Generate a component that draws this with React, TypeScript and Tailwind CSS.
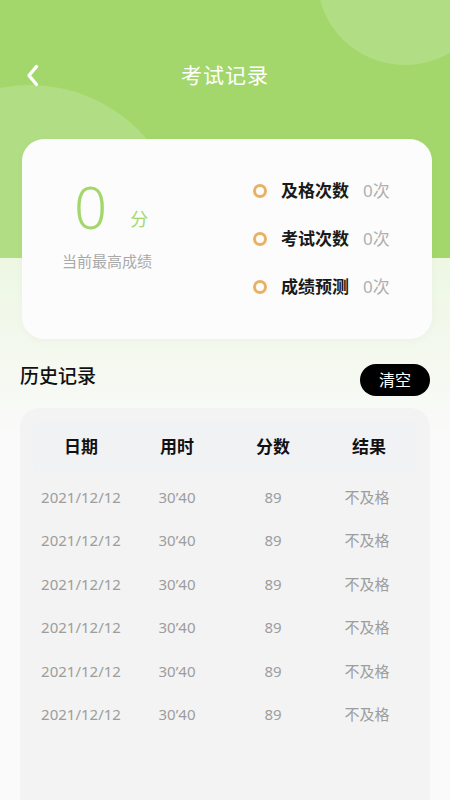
const stats = [
  { label: "及格次数", value: "0次" },
  { label: "考试次数", value: "0次" },
  { label: "成绩预测", value: "0次" },
];

const records = Array.from({ length: 6 }, () => ({
  date: "2021/12/12",
  time: "30’40",
  score: "89",
  result: "不及格",
}));

export default function App() {
  return (
    <div
      className="relative w-[450px] h-[800px] overflow-hidden bg-[linear-gradient(to_bottom,#a4d76b_0px,#a4d76b_258px,#edf7e2_258px,#fafafa_440px)]"
      style={{ fontFamily: '"Noto Sans", "Noto Sans CJK SC", sans-serif' }}
    >
      {/* decorative circles in the green header */}
      <div className="absolute left-0 top-0 w-[450px] h-[258px] overflow-hidden">
        <div className="absolute left-[317px] top-[-111px] w-[176px] h-[176px] rounded-full bg-[#b1de84]" />
        <div className="absolute left-[-123px] top-[85px] w-[306px] h-[306px] rounded-full bg-[#b1de84]" />
      </div>

      <div className="relative">
        {/* nav bar */}
        <div className="relative flex items-center justify-center h-9 mt-[58px]">
          <svg className="absolute left-[26px] top-[6px]" width="13" height="23" viewBox="0 0 13 23" fill="none">
            <polyline points="10.5,2.5 3,11.5 10.5,20.5" stroke="white" strokeWidth="3.4" strokeLinecap="round" strokeLinejoin="round" />
          </svg>
          <h1 className="text-[21px] text-white tracking-[1px]">考试记录</h1>
        </div>

        {/* summary card */}
        <div className="ml-[22px] w-[410px] mt-[45px] h-[200px] rounded-[22px] bg-[#fcfcfc] shadow-[0_2px_8px_rgba(0,0,0,0.03)] flex">
          <div className="w-[200px] pl-[40px] pt-[38px]">
            <div className="flex items-end">
              <span className="ml-[12px] text-[58px] leading-[60px] font-light text-[#a4d76b]">0</span>
              <span className="ml-[23px] mb-[6px] text-[18px] leading-[24px] text-[#a4d76b]">分</span>
            </div>
            <p className="mt-[14px] text-[15px] leading-5 text-[#a9a9a9]">当前最高成绩</p>
          </div>
          <div className="pl-[31px] pt-[40px] flex flex-col gap-[24px]">
            {stats.map((s) => (
              <div key={s.label} className="flex items-center h-6">
                <span className="w-[14px] h-[14px] rounded-full border-[3.5px] border-[#e9b163]" />
                <span className="ml-[14px] text-[17px] font-bold text-[#1a1a1a]">{s.label}</span>
                <span className="ml-[14px] text-[17px] text-[#b0b0b0]">{s.value}</span>
              </div>
            ))}
          </div>
        </div>

        {/* history header */}
        <div className="flex items-start justify-between mx-[20px] mt-[25px] h-8">
          <h2 className="text-[19px] leading-[24px] font-medium text-[#111]">历史记录</h2>
          <button className="w-[70px] h-8 rounded-full bg-black text-white text-[16px]">清空</button>
        </div>

        {/* records table */}
        <div className="mx-[20px] mt-[12px] h-[400px] rounded-t-[20px] bg-[#f3f3f3] px-[13px] pt-[14px]">
          <div className="grid grid-cols-4 h-[50px] items-center bg-[#f1f2f4] rounded-[4px] text-[17px] font-bold text-[#111] text-center">
            <span>日期</span>
            <span>用时</span>
            <span>分数</span>
            <span>结果</span>
          </div>
          <div className="pt-[3px]">
            {records.map((r, i) => (
              <div key={i} className="grid grid-cols-4 h-[43.5px] items-center text-center text-[15px] text-[#9d9d9d]">
                <span>{r.date}</span>
                <span>{r.time}</span>
                <span>{r.score}</span>
                <span className="pr-[4px]">{r.result}</span>
              </div>
            ))}
          </div>
        </div>
      </div>
    </div>
  );
}
